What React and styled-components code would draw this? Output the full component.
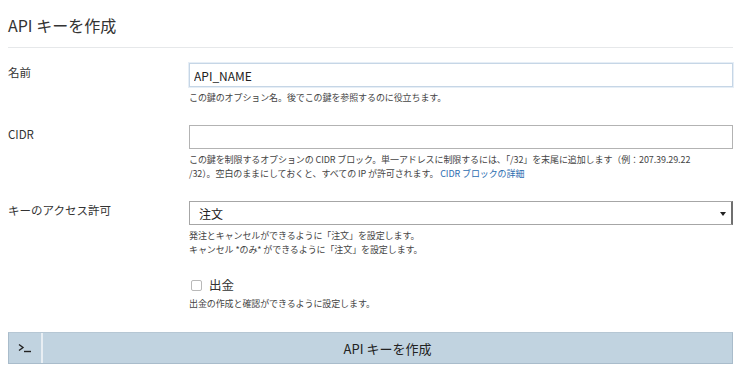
import React from "react";
import styled, { createGlobalStyle } from "styled-components";

const FONT = `"Noto Sans CJK JP", "Liberation Sans", sans-serif`;

const Global = createGlobalStyle`
  html, body { margin: 0; padding: 0; background: #fff; }
  body {
    font-family: ${FONT};
    color: #333;
  }
`;

const Page = styled.div`
  width: 725px;
  padding: 0 17px 0 8px;
`;

const Title = styled.h1`
  margin: 0;
  padding-top: 14px;
  box-sizing: border-box;
  height: 48px;
  font-size: 16px;
  font-weight: normal;
  line-height: 22px;
  color: #333;
  border-bottom: 1px solid #e6e8ea;
`;

const Form = styled.div`
  padding-top: 15px;
  display: flex;
  flex-direction: column;
  gap: 20px;
`;

const Row = styled.div`
  display: grid;
  grid-template-columns: 181px 1fr;
`;

const Label = styled.div`
  font-size: 11.5px;
  line-height: 18px;
  color: #333;
`;

const Field = styled.div`
  display: flex;
  flex-direction: column;
`;

const TextInput = styled.input`
  box-sizing: border-box;
  width: 100%;
  height: 24px;
  margin: 0;
  padding: 0 4px;
  border: 1px solid ${(p) => (p.$focused ? "#c6d6e6" : "#b3b3b3")};
  box-shadow: ${(p) => (p.$focused ? "0 0 0 1px #e6eef6" : "none")};
  font-family: ${FONT};
  font-size: 12px;
  color: #222;
  outline: none;
  background: #fff;
`;

const Help = styled.div`
  margin-top: 4px;
  font-size: 9px;
  letter-spacing: -0.1px;
  line-height: 14px;
  color: #444;
`;

const Link = styled.a`
  color: #2c6db0;
  text-decoration: none;
`;

const SelectBox = styled.div`
  position: relative;
  box-sizing: border-box;
  height: 24px;
  border: 1px solid #a6a6a6;
  border-right: 2px solid #6f6f6f;
  display: flex;
  align-items: center;
  padding: 0 9px;
  font-size: 12px;
  color: #222;
  background: #fff;
`;

const Caret = styled.span`
  position: absolute;
  right: 5px;
  top: 10px;
  width: 0;
  height: 0;
  border-left: 3px solid transparent;
  border-right: 3px solid transparent;
  border-top: 4px solid #222;
`;

const CheckRow = styled.label`
  display: flex;
  align-items: center;
  gap: 7px;
  font-size: 12.5px;
  line-height: 16px;
  color: #333;
  padding-left: 2px;
`;

const Box = styled.span`
  width: 9px;
  height: 9px;
  border: 1px solid #b9b9b9;
  border-radius: 2px;
  background: #fff;
`;

const Button = styled.div`
  margin-top: 21px;
  box-sizing: border-box;
  height: 32px;
  display: flex;
  background: #c1d3e0;
  border: 1px solid #a9bccb;
  border-top-color: #b6c7d4;
`;

const IconCell = styled.div`
  width: 32px;
  border-right: 2px solid #e8eef3;
  display: flex;
  align-items: center;
  justify-content: center;
`;

const ButtonText = styled.div`
  flex: 1;
  display: flex;
  align-items: center;
  justify-content: center;
  font-size: 13px;
  color: #222;
`;

export default function App() {
  return (
    <>
      <Global />
      <Page>
        <Title>API キーを作成</Title>
        <Form>
          <Row>
            <Label>名前</Label>
            <Field>
              <TextInput $focused defaultValue="API_NAME" />
              <Help>この鍵のオプション名。後でこの鍵を参照するのに役立ちます。</Help>
            </Field>
          </Row>
          <Row>
            <Label>CIDR</Label>
            <Field>
              <TextInput />
              <Help>
                この鍵を制限するオプションの CIDR ブロック。単一アドレスに制限するには、「/32」を末尾に追加します（例：207.39.29.22
                <br />
                /32）。空白のままにしておくと、すべての IP が許可されます。 <Link href="#">CIDR ブロックの詳細</Link>
              </Help>
            </Field>
          </Row>
          <Row>
            <Label>キーのアクセス許可</Label>
            <Field>
              <SelectBox>
                注文
                <Caret />
              </SelectBox>
              <Help>
                発注とキャンセルができるように「注文」を設定します。
                <br />
                キャンセル *のみ* ができるように「注文」を設定します。
              </Help>
            </Field>
          </Row>
          <Row>
            <div />
            <Field>
              <CheckRow>
                <Box />
                出金
              </CheckRow>
              <Help>出金の作成と確認ができるように設定します。</Help>
            </Field>
          </Row>
        </Form>
        <Button>
          <IconCell>
            <svg width="14" height="10" viewBox="0 0 14 10">
              <path d="M1 1.5 L5 4.5 L1 7.5" fill="none" stroke="#222" strokeWidth="1.4" />
              <path d="M6 8.5 H13" stroke="#222" strokeWidth="1.4" />
            </svg>
          </IconCell>
          <ButtonText>API キーを作成</ButtonText>
        </Button>
      </Page>
    </>
  );
}
